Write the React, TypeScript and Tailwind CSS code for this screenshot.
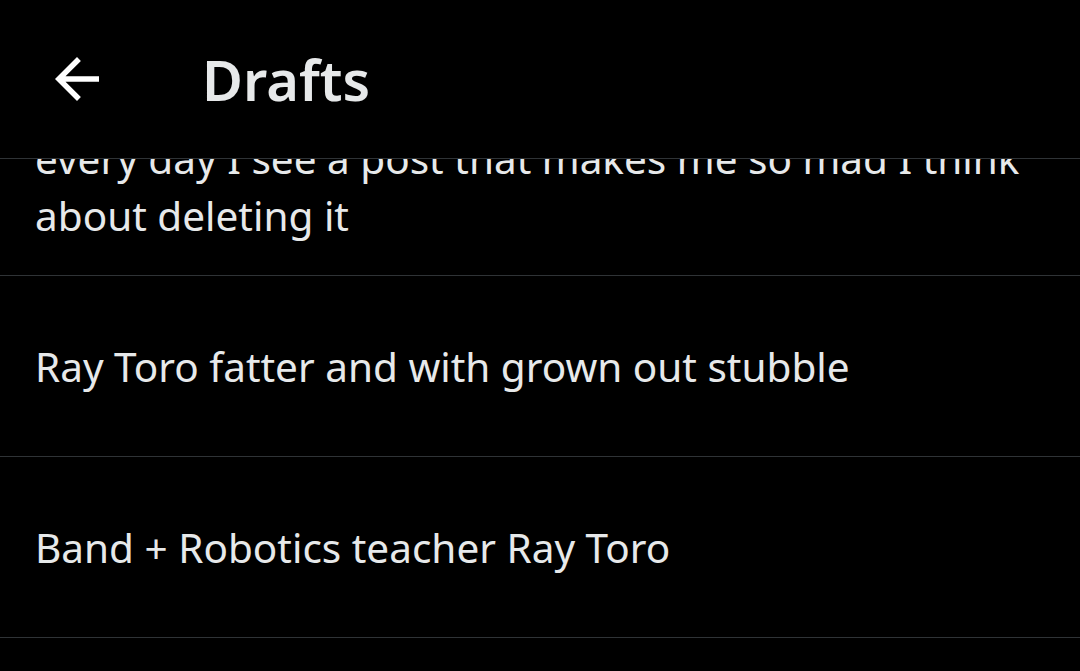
const drafts = [
  "every day I see a post that makes me so mad I think about deleting it",
  "Ray Toro fatter and with grown out stubble",
  "Band + Robotics teacher Ray Toro",
  "",
];

function BackArrow() {
  return (
    <svg viewBox="0 0 24 24" className="h-[66px] w-[66px] fill-white">
      <path d="M20 11H7.83l5.59-5.59L12 4l-8 8 8 8 1.41-1.41L7.83 13H20v-2z" />
    </svg>
  );
}

export default function App() {
  return (
    <div
      className="flex h-[671px] w-[1080px] flex-col overflow-hidden bg-black text-[#e7e9ea]"
      style={{ fontFamily: '"Noto Sans", "Open Sans", sans-serif' }}
    >
      <header className="relative z-10 flex h-[159px] shrink-0 items-center border-b border-[#2f3336] bg-black pl-[44px]">
        <BackArrow />
        <h1 className="ml-[92px] text-[56px] font-semibold leading-none">Drafts</h1>
      </header>

      <div className="flex-1 overflow-hidden">
        <ul className="-mt-[49px]">
          {drafts.map((text, i) => (
            <li
              key={i}
              className={`border-b border-[#2f3336] pl-[35px] pr-[30px] text-[40.5px] leading-[57px] ${
                i === 0 ? "pt-[20px] pb-[31px]" : "pt-[62px] pb-[61px]"
              }`}
            >
              {text || "\u00a0"}
            </li>
          ))}
        </ul>
      </div>
    </div>
  );
}
